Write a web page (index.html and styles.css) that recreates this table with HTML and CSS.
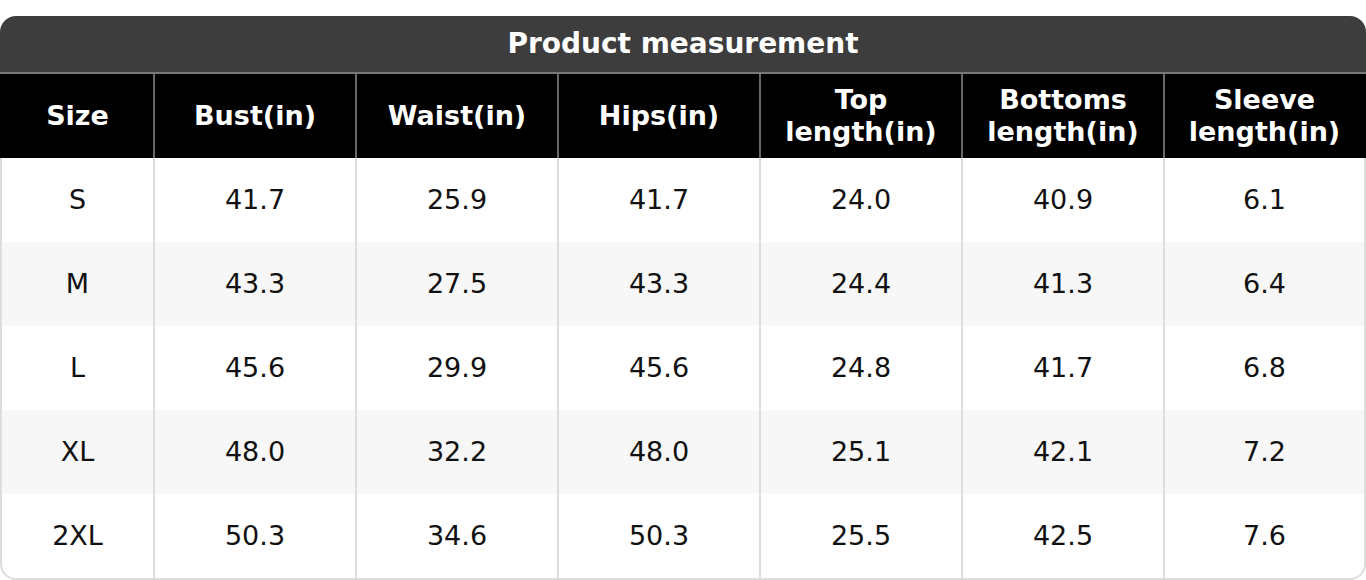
FILE: index.html
```
<!DOCTYPE html>
<html>
<head>
<meta charset="utf-8">
<link rel="stylesheet" href="styles.css">
</head>
<body>
<div class="sheet">
  <div class="title">Product measurement</div>
  <table class="grid">
    <colgroup>
      <col class="c-size"><col class="c"><col class="c"><col class="c"><col class="c"><col class="c"><col class="c-last">
    </colgroup>
    <thead>
      <tr>
        <th>Size</th>
        <th>Bust(in)</th>
        <th>Waist(in)</th>
        <th>Hips(in)</th>
        <th>Top<br>length(in)</th>
        <th>Bottoms<br>length(in)</th>
        <th>Sleeve<br>length(in)</th>
      </tr>
    </thead>
    <tbody>
      <tr><td>S</td><td>41.7</td><td>25.9</td><td>41.7</td><td>24.0</td><td>40.9</td><td>6.1</td></tr>
      <tr><td>M</td><td>43.3</td><td>27.5</td><td>43.3</td><td>24.4</td><td>41.3</td><td>6.4</td></tr>
      <tr><td>L</td><td>45.6</td><td>29.9</td><td>45.6</td><td>24.8</td><td>41.7</td><td>6.8</td></tr>
      <tr><td>XL</td><td>48.0</td><td>32.2</td><td>48.0</td><td>25.1</td><td>42.1</td><td>7.2</td></tr>
      <tr><td>2XL</td><td>50.3</td><td>34.6</td><td>50.3</td><td>25.5</td><td>42.5</td><td>7.6</td></tr>
    </tbody>
  </table>
</div>
</body>
</html>
```
FILE: styles.css
```
html, body {
  margin: 0;
  padding: 0;
  background: #ffffff;
}
body {
  padding-top: 16px;
  font-family: "DejaVu Sans", Verdana, sans-serif;
  color: #111;
}
.sheet {
  width: 1366px;
}
.title {
  box-sizing: border-box;
  height: 58px;
  background: #3d3d3d;
  color: #ffffff;
  font-weight: bold;
  font-size: 28px;
  line-height: 55px;
  text-align: center;
  border-radius: 16px 16px 0 0;
  border-bottom: 2px solid #777777;
}
.grid {
  width: 1366px;
  table-layout: fixed;
  border-collapse: separate;
  border-spacing: 0;
}
.c-size { width: 153px; }
.c { width: 202px; }
.c-last { width: 203px; }
.grid th {
  background: #000000;
  color: #ffffff;
  font-weight: bold;
  font-size: 27px;
  line-height: 32.5px;
  height: 84px;
  padding: 0;
  border-left: 2px solid #666666;
  box-sizing: border-box;
}
.grid th:first-child { border-left-color: #000000; }
.grid th:last-child { border-right: 2px solid #000000; }
.grid td {
  font-size: 27px;
  height: 84px;
  padding: 0 0 2px;
  text-align: center;
  border-left: 2px solid #dddddd;
  box-sizing: border-box;
  color: #111111;
}
.grid td:last-child { border-right: 2px solid #dddddd; }
.grid tbody tr:nth-child(even) td { background: #f7f7f7; }
.grid tbody tr:last-child td {
  border-bottom: 2px solid #dddddd;
  height: 86px;
}
.grid tbody tr:last-child td:first-child { border-bottom-left-radius: 16px; }
.grid tbody tr:last-child td:last-child { border-bottom-right-radius: 16px; }
```
